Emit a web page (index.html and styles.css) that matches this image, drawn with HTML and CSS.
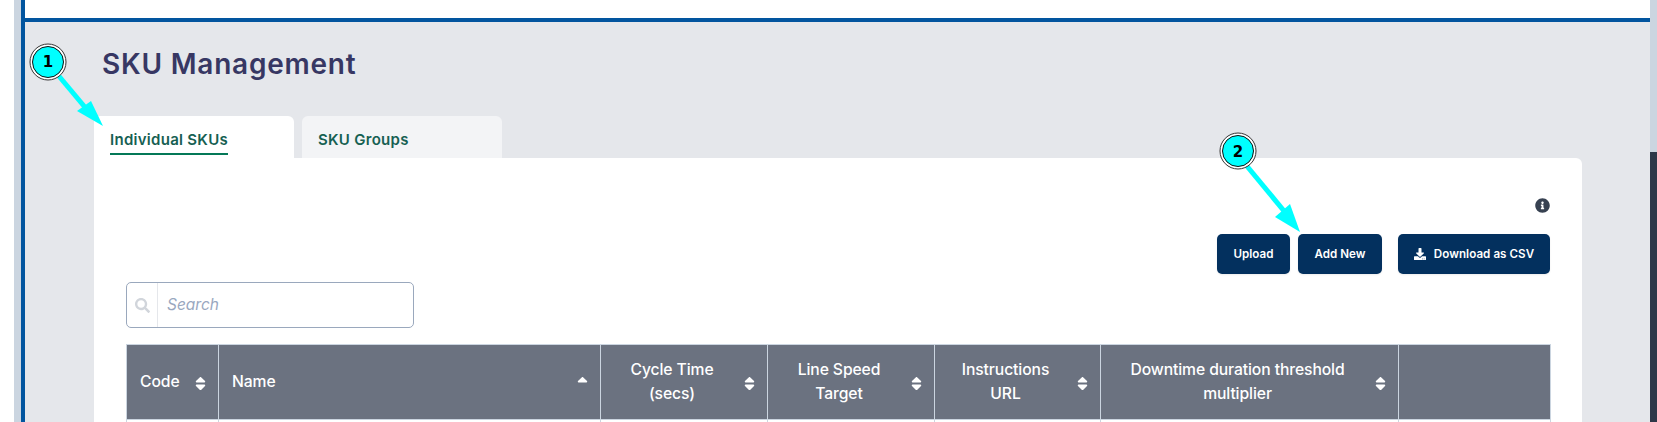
FILE: index.html
```html
<!DOCTYPE html>
<html lang="en">
<head>
<meta charset="utf-8">
<title>SKU Management</title>
<link rel="stylesheet" href="styles.css">
</head>
<body>
<svg class="defs" aria-hidden="true">
  <symbol id="i-sort" viewBox="0 0 320 512"><path d="M41 288h238c21.4 0 32.1 25.9 17 41L177 448c-9.4 9.4-24.6 9.4-33.9 0L24 329c-15.1-15.1-4.4-41 17-41zm255-105L177 64c-9.4-9.4-24.6-9.4-33.9 0L24 183c-15.1 15.1-4.4 41 17 41h238c21.4 0 32.1-25.9 17-41z"/></symbol>
  <symbol id="i-sort-up" viewBox="0 0 320 512"><path d="M279 224H41c-21.4 0-32.1-25.9-17-41L143 64c9.4-9.4 24.6-9.4 33.9 0l119 119c15.2 15.1 4.5 41-16.9 41z"/></symbol>
</svg>
<div class="page">
  <div class="frame">
    <div class="topbar"></div>
    <main class="content">
      <h1 class="title">SKU Management</h1>
      <div class="tabs">
        <div class="tab tab-active"><span class="tab-label tab-label-active">Individual SKUs</span></div>
        <div class="tab"><span class="tab-label">SKU Groups</span></div>
      </div>
      <section class="card">
        <div class="info-row">
          <svg class="info-icon" viewBox="0 0 512 512"><path d="M256 8C119.043 8 8 119.083 8 256c0 136.997 111.043 248 248 248s248-111.003 248-248C504 119.083 392.957 8 256 8zm0 110c23.196 0 42 18.804 42 42s-18.804 42-42 42-42-18.804-42-42 18.804-42 42-42zm56 254c0 6.627-5.373 12-12 12h-88c-6.627 0-12-5.373-12-12v-24c0-6.627 5.373-12 12-12h12v-64h-12c-6.627 0-12-5.373-12-12v-24c0-6.627 5.373-12 12-12h64c6.627 0 12 5.373 12 12v100h12c6.627 0 12 5.373 12 12v24z"/></svg>
        </div>
        <div class="actions">
          <button class="btn btn-upload">Upload</button>
          <button class="btn btn-add">Add New</button>
          <button class="btn btn-download">
            <svg class="dl-icon" viewBox="0 0 512 512"><path d="M216 0h80c13.3 0 24 10.7 24 24v168h87.7c17.8 0 26.7 21.5 14.1 34.1L269.7 378.3c-7.5 7.5-19.8 7.5-27.3 0L90.1 226.1c-12.6-12.6-3.7-34.1 14.1-34.1H192V24c0-13.3 10.7-24 24-24zm296 376v112c0 13.3-10.7 24-24 24H24c-13.3 0-24-10.7-24-24V376c0-13.3 10.7-24 24-24h146.7l49 49c20.1 20.1 52.5 20.1 72.6 0l49-49H488c13.3 0 24 10.7 24 24zm-124 88c0-11-9-20-20-20s-20 9-20 20 9 20 20 20 20-9 20-20zm64 0c0-11-9-20-20-20s-20 9-20 20 9 20 20 20 20-9 20-20z"/></svg>
            Download as CSV
          </button>
        </div>
        <div class="search">
          <span class="search-addon">
            <svg class="search-icon" viewBox="0 0 512 512"><path d="M505 442.7L405.3 343c-4.5-4.5-10.6-7-17-7H372c27.6-35.3 44-79.7 44-128C416 93.1 322.9 0 208 0S0 93.1 0 208s93.1 208 208 208c48.3 0 92.7-16.4 128-44v16.3c0 6.4 2.5 12.5 7 17l99.7 99.7c9.4 9.4 24.6 9.4 33.9 0l28.3-28.3c9.4-9.4 9.4-24.6.1-34zM208 336c-70.7 0-128-57.2-128-128 0-70.7 57.2-128 128-128 70.7 0 128 57.2 128 128 0 70.7-57.2 128-128 128z"/></svg>
          </span>
          <span class="search-placeholder">Search</span>
        </div>
        <div class="table">
          <div class="th"><span class="th-label th-left">Code</span><svg class="sort"><use href="#i-sort"/></svg></div>
          <div class="th"><span class="th-label th-left">Name</span><svg class="sort"><use href="#i-sort-up"/></svg></div>
          <div class="th"><span class="th-label">Cycle Time<br>(secs)</span><svg class="sort"><use href="#i-sort"/></svg></div>
          <div class="th"><span class="th-label">Line Speed<br>Target</span><svg class="sort"><use href="#i-sort"/></svg></div>
          <div class="th"><span class="th-label">Instructions<br>URL</span><svg class="sort"><use href="#i-sort"/></svg></div>
          <div class="th"><span class="th-label">Downtime duration threshold<br>multiplier</span><svg class="sort"><use href="#i-sort"/></svg></div>
          <div class="th"></div>
          <div class="td"></div><div class="td"></div><div class="td"></div><div class="td"></div><div class="td"></div><div class="td"></div><div class="td"></div>
        </div>
      </section>
    </main>
  </div>
  <div class="scrollbar"><div class="thumb"></div></div>

  <svg class="callouts" viewBox="0 0 1657 422" aria-hidden="true">
    <line class="arrow-line" x1="58" y1="75" x2="94" y2="118"/>
    <polygon class="arrow-head" points="103,126 77,111 91,101"/>
    <line class="arrow-line" x1="1246" y1="165" x2="1289" y2="217"/>
    <polygon class="arrow-head" points="1300,232 1275,217 1290,204"/>
    <circle class="ring-outer" cx="48" cy="62" r="18"/>
    <circle class="ring-inner" cx="48" cy="62" r="15.5"/>
    <circle class="ring-outer" cx="1238" cy="151" r="18"/>
    <circle class="ring-inner" cx="1238" cy="151" r="15.5"/>
    <text class="callout-num" x="48" y="67">1</text>
    <text class="callout-num" x="1238" y="157">2</text>
  </svg>
</div>
</body>
</html>
```
FILE: styles.css
```css
* { box-sizing: border-box; }
html, body { margin: 0; height: 100%; overflow: hidden; background: #fff; }
body { font-family: "Inter", "Liberation Sans", sans-serif; }
.defs { display: none; }

.page {
  position: relative;
  display: flex;
  height: 422px;
  padding-left: 14px;
  overflow: hidden;
}
.frame {
  flex: 1;
  min-width: 0;
  display: flex;
  flex-direction: column;
  border-left: 7px solid #cbd5e0;
  position: relative;
}
.frame::before {
  content: "";
  position: absolute;
  left: 0; top: 0; bottom: 0;
  width: 4px;
  background: #02559f;
}
.topbar {
  height: 22px;
  flex: none;
  margin-left: 4px;
  background: #fff;
  border-bottom: 4px solid #02559f;
}
.content {
  flex: 1;
  margin-left: 4px;
  background: #e5e7eb;
  padding: 25px 68px 0 69px;
  min-height: 0;
}
.title {
  margin: 0 0 35px 8px;
  height: 34px;
  font-size: 28px;
  line-height: 34px;
  font-weight: 600;
  color: #373763;
  letter-spacing: 0.78px;
}
.tabs { display: flex; gap: 8px; height: 42px; }
.tab {
  width: 200px;
  background: #f3f4f6;
  border-radius: 6px 6px 0 0;
  padding: 13px 16px 0;
}
.tab-active { background: #fff; }
.tab-label {
  display: inline-block;
  font-size: 15px;
  line-height: 20px;
  font-weight: 600;
  color: #166052;
  letter-spacing: 0.28px;
  white-space: nowrap;
}
.tab-label-active { border-bottom: 2px solid #047857; height: 25px; }

.card {
  background: #fff;
  border-radius: 0 6px 6px 6px;
  padding: 40px 32px 0 32px;
  height: 300px;
}
.info-row { display: flex; justify-content: flex-end; height: 14px; margin-bottom: 22px; }
.info-icon { width: 15px; height: 15px; fill: #374151; flex: none; }
.actions { display: flex; justify-content: flex-end; height: 40px; margin-bottom: 8px; }
.btn {
  height: 40px;
  border: 0;
  border-radius: 5px;
  background: #03305e;
  color: #fff;
  font-family: inherit;
  font-size: 11.6px;
  font-weight: 600;
  letter-spacing: 0.05px;
  padding: 0;
  box-shadow: 0 1px 2px rgba(0,0,0,.08);
  display: flex;
  align-items: center;
  justify-content: center;
}
.btn-upload { width: 73px; margin-right: 8px; }
.btn-add { width: 84px; margin-right: 16px; }
.btn-download { width: 152px; }
.dl-icon { width: 12px; height: 12px; fill: #fff; margin-right: 8px; }

.search {
  width: 288px;
  height: 46px;
  display: flex;
  align-items: center;
  border: 1px solid #9aa8bd;
  border-radius: 5px;
}
.search-addon {
  width: 31px;
  height: 100%;
  flex: none;
  display: flex;
  align-items: center;
  justify-content: center;
  border-right: 1px solid #e5e7eb;
}
.search-icon { width: 15px; height: 15px; fill: #d1d5db; }
.search-placeholder {
  padding: 0 0 2px 9px;
  font-size: 15.5px;
  font-style: italic;
  color: #9aa8bf;
}

.table {
  margin-top: 16px;
  width: 1425px;
  display: grid;
  grid-template-columns: 92px 382px 167px 167px 166px 298px 152px;
  grid-template-rows: 75px 30px;
  border-top: 1px solid #cbd5e0;
  border-left: 1px solid #cbd5e0;
}
.th {
  background: #6b7280;
  color: #fff;
  border-right: 1px solid #cbd5e0;
  border-bottom: 1px solid #cbd5e0;
  padding: 0 12px 0 13px;
  display: flex;
  align-items: center;
  font-size: 15.7px;
  font-weight: 500;
  line-height: 24px;
  letter-spacing: -0.1px;
}
.th-label { flex: 1; text-align: center; padding-right: 14px; }
.th-left { text-align: left; padding-right: 0; }
.sort { flex: none; width: 11px; height: 17px; fill: #fff; margin-top: 2px; }
.td { border-right: 1px solid #cbd5e0; background: #fff; }

.scrollbar { flex: none; width: 7px; background: #cbd5e0; padding-top: 152px; }
.thumb { height: 100%; background: #2d3748; }

.callouts {
  position: absolute;
  left: 0; top: 0;
  width: 1657px;
  height: 422px;
  pointer-events: none;
}
.arrow-line { stroke: #00ffff; stroke-width: 5; }
.arrow-head { fill: #00ffff; }
.ring-outer { fill: #fff; stroke: #333; stroke-width: 1; }
.ring-inner { fill: #00ffff; stroke: #111; stroke-width: 1; }
.callout-num {
  font-family: "DejaVu Sans", sans-serif;
  font-size: 15px;
  font-weight: 700;
  fill: #000;
  text-anchor: middle;
}
```
